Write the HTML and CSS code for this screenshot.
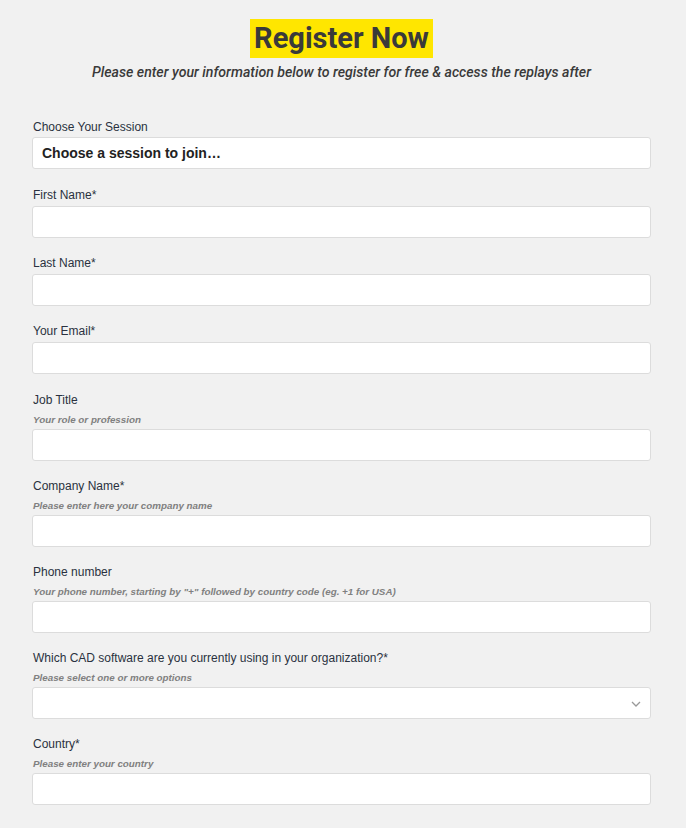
FILE: index.html
```html
<!DOCTYPE html>
<html lang="en">
<head>
<meta charset="UTF-8" />
<meta name="viewport" content="width=device-width, initial-scale=1" />
<title>Register Now</title>
<link rel="stylesheet" href="styles.css">
</head>
<body>

<div class="header">
  <h1><span class="highlight">Register Now</span></h1>
  <p class="subtitle">Please enter your information below to register for free &amp; access the replays after</p>
</div>

<form class="regForm">
  <div class="field first">
    <label>Choose Your Session</label>
    <div class="input selectBox">Choose a session to join…</div>
  </div>
  <div class="field">
    <label>First Name*</label>
    <input class="input" type="text">
  </div>
  <div class="field">
    <label>Last Name*</label>
    <input class="input" type="text">
  </div>
  <div class="field">
    <label>Your Email*</label>
    <input class="input" type="text">
  </div>
  <div class="field hasHint">
    <label>Job Title</label>
    <div class="hint">Your role or profession</div>
    <input class="input" type="text">
  </div>
  <div class="field hasHint">
    <label>Company Name*</label>
    <div class="hint">Please enter here your company name</div>
    <input class="input" type="text">
  </div>
  <div class="field hasHint">
    <label>Phone number</label>
    <div class="hint">Your phone number, starting by "+" followed by country code (eg. +1 for USA)</div>
    <input class="input" type="text">
  </div>
  <div class="field hasHint">
    <label>Which CAD software are you currently using in your organization?*</label>
    <div class="hint">Please select one or more options</div>
    <div class="input multiSelect">
      <svg class="chevron" width="10" height="6" viewBox="0 0 10 6"><path d="M1 1l4 4 4-4" fill="none" stroke="#999" stroke-width="1.3"/></svg>
    </div>
  </div>
  <div class="field hasHint">
    <label>Country*</label>
    <div class="hint">Please enter your country</div>
    <input class="input" type="text">
  </div>
</form>

</body>
</html>
```

FILE: styles.css
```css
/* page */
body {
  margin: 0;
  background: #f1f1f1;
  font-family: "Liberation Sans", Arial, sans-serif;
  color: #2a3140;
}

/* title block */
.header {
  text-align: center;
  padding: 19px 3px 0 0;
}
.header h1 {
  margin: 0;
  font-family: Roboto, "Liberation Sans", sans-serif;
  font-size: 29px;
  font-weight: 700;
  line-height: 39px;
  color: #3a3a3a;
}
.highlight {
  display: inline-block;
  background: #ffe600;
  padding: 0 4px;
}
.subtitle {
  margin: 5px 0 0;
  font-family: Roboto, "Liberation Sans", sans-serif;
  font-style: italic;
  font-weight: 500;
  font-size: 14.15px;
  line-height: 18px;
  color: #3a3a3a;
}

/* form */
.regForm {
  margin: 38px 35px 0 32px;
}
.field {
  margin-bottom: 17px;
}
.field label {
  display: block;
  font-size: 12px;
  line-height: 16px;
  margin-bottom: 3px;
  padding-left: 1px;
}
.field.first {
  margin-bottom: 18px;
}
.field.first label {
  margin-bottom: 2px;
}
.field.hasHint {
  padding-top: 1px;
  margin-bottom: 16px;
}
.field.hasHint label {
  margin-bottom: 5px;
}
.hint {
  font-size: 9.8px;
  font-style: italic;
  font-weight: 700;
  color: #808080;
  line-height: 14px;
  margin: 0 0 2px 1px;
}
.input {
  display: block;
  box-sizing: border-box;
  width: 100%;
  height: 32px;
  margin: 0;
  background: #fff;
  border: 1px solid #dcdcdc;
  border-radius: 3px;
  font-family: inherit;
}
.selectBox {
  padding: 0 9px;
  font-size: 14px;
  font-weight: 700;
  line-height: 30px;
  color: #222;
}
.multiSelect {
  position: relative;
}
.chevron {
  position: absolute;
  right: 9px;
  top: 13px;
}
```
